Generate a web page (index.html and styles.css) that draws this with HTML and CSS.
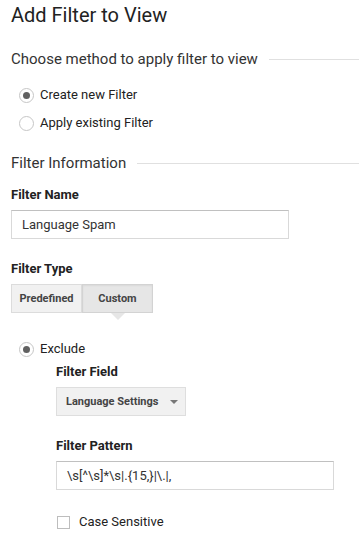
FILE: index.html
```html
<!DOCTYPE html>
<html>
<head>
<meta charset="utf-8">
<link rel="stylesheet" href="styles.css">
</head>
<body>
<div class="page">
  <h1 class="title">Add Filter to View</h1>

  <div class="section-head"><span>Choose method to apply filter to view</span><i class="rule"></i></div>
  <div class="radios">
    <label class="radio-row"><span class="radio checked"></span><span>Create new Filter</span></label>
    <label class="radio-row"><span class="radio"></span><span>Apply existing Filter</span></label>
  </div>

  <div class="section-head info"><span>Filter Information</span><i class="rule"></i></div>

  <div class="field-label name-label">Filter Name</div>
  <div class="text-input name-input">Language Spam</div>

  <div class="field-label type-label">Filter Type</div>
  <div class="segmented">
    <div class="seg">Predefined</div>
    <div class="seg active">Custom</div>
  </div>

  <label class="radio-row exclude"><span class="radio checked"></span><span>Exclude</span></label>

  <div class="sub">
    <div class="field-label">Filter Field</div>
    <div class="dropdown"><span>Language Settings</span><span class="caret"></span></div>

    <div class="field-label pattern-label">Filter Pattern</div>
    <div class="text-input pattern-input">\s[^\s]*\s|.{15,}|\.|,</div>

    <label class="check-row"><span class="checkbox"></span><span>Case Sensitive</span></label>
  </div>
</div>
</body>
</html>
```

FILE: styles.css
```css
* { box-sizing: border-box; }
html, body { margin: 0; padding: 0; background: #fff; }
body { font-family: Roboto, "Noto Sans", Arial, sans-serif; color: #222; }
.page { padding: 0 0 0 11px; width: 359px; }
.title { margin: 0; padding-top: 3px; font-size: 20px; font-weight: 400; line-height: 24px; color: #222; }

.section-head { display: flex; align-items: center; margin-top: 23px; font-size: 15px; line-height: 18px; color: #333; }
.section-head .rule { flex: 1; height: 1px; background: #e0e0e0; margin-left: 11px; margin-top: 1px; }
.section-head.info { margin-top: 23px; }

.radios { display: flex; flex-direction: column; gap: 12px; margin-top: 19px; padding-left: 8px; }
.radio-row { display: flex; align-items: center; gap: 6px; font-size: 13px; line-height: 16px; color: #222; }
.radio { width: 15px; height: 15px; border-radius: 50%; border: 1px solid #c6c6c6; background: #fff; display: flex; align-items: center; justify-content: center; }
.radio.checked::after { content: ""; width: 7px; height: 7px; border-radius: 50%; background: #616161; }

.field-label { font-size: 13px; font-weight: 700; line-height: 16px; color: #222; margin-top: 24px; }
.field-label.name-label { margin-top: 15px; }
.text-input { margin-top: 7px; height: 29px; border: 1px solid #d9d9d9; border-top-color: #c0c0c0; padding: 0 10px; font-size: 13px; line-height: 27px; color: #333; }
.name-input { width: 278px; }
.type-label { margin-top: 22px; }

.segmented { display: flex; margin-top: 7px; }
.seg { height: 29px; width: 71px; display: flex; align-items: center; justify-content: center; font-size: 11px; font-weight: 700; color: #444; background: #f1f1f1; border: 1px solid #dcdcdc; }
.seg.active { position: relative; background: #e6e6e6; border-color: #d3d3d3; box-shadow: inset 0 1px 2px rgba(0,0,0,0.06); }
.seg.active::after { content: ""; position: absolute; left: 50%; bottom: -8px; margin-left: -7px; border-left: 7px solid transparent; border-right: 7px solid transparent; border-top: 7px solid #e6e6e6; }

.radio-row.exclude { margin-top: 28px; padding-left: 8px; }

.sub { padding-left: 45px; }
.sub .field-label:first-child { margin-top: 7px; }
.dropdown { margin-top: 7px; width: 130px; height: 29px; background: #f1f1f1; border: 1px solid #dedede; display: flex; align-items: center; padding-left: 9px; gap: 12px; font-size: 11px; font-weight: 700; color: #444; }
.caret { width: 0; height: 0; border-left: 4px solid transparent; border-right: 4px solid transparent; border-top: 4px solid #777; }
.pattern-label { margin-top: 22px; }
.pattern-input { width: 278px; }

.check-row { display: flex; align-items: center; gap: 9px; margin-top: 24px; font-size: 13px; line-height: 16px; color: #222; }
.checkbox { width: 13px; height: 13px; border: 1px solid #bdbdbd; background: #fff; margin-left: 1px; }
```
